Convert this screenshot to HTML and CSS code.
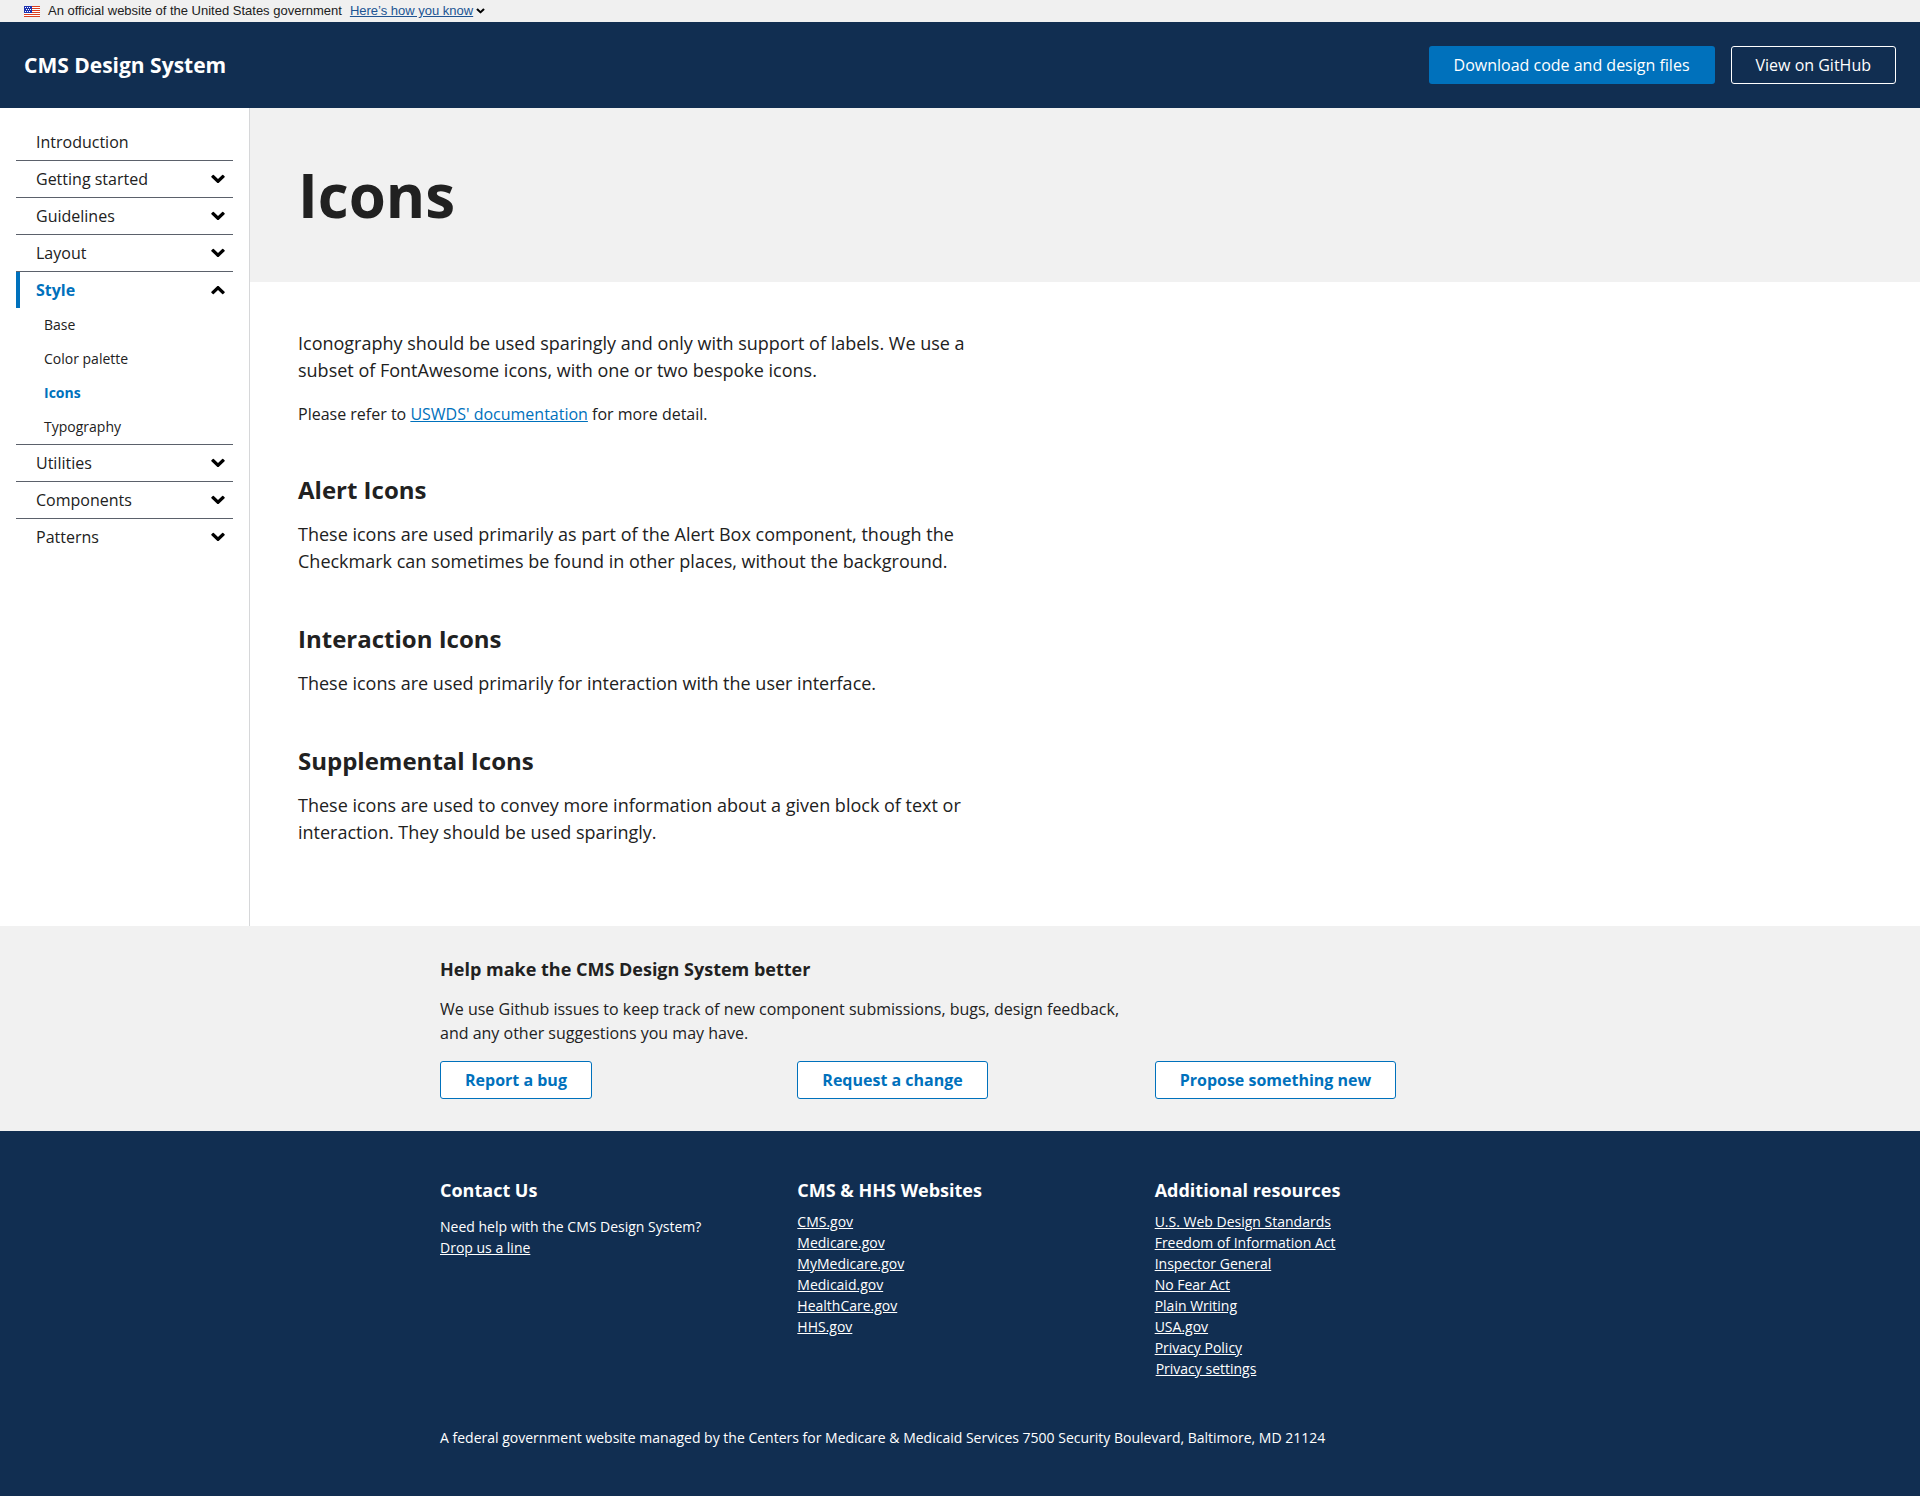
FILE: index.html
```html
<!DOCTYPE html>
<html lang="en">
<head>
<meta charset="utf-8">
<meta name="viewport" content="width=device-width, initial-scale=1">
<title>Icons - CMS Design System</title>
<link rel="stylesheet" href="styles.css">
</head>
<body>
<svg class="sprite" aria-hidden="true">
  <symbol id="chevron" viewBox="0 0 14 10"><path fill="currentColor" d="M.4 2.2L1.800.9Q2.300.5 2.800.9L7 4.900 11.200.9Q11.700.5 12.200.9L13.600 2.200Q14 2.700 13.600 3.200L7.600 8.900Q7 9.300 6.400 8.900L.4 3.200Q0 2.700.4 2.200Z"/></symbol>
</svg>
<section class="banner" aria-label="Official government website">
  <svg class="flag" viewBox="0 0 16 11" aria-hidden="true" shape-rendering="crispEdges">
    <path fill="#fff" d="M0 0h16v11H0z"/>
    <path fill="#db3e1f" d="M8 0h8v1H8zM8 2h8v1H8zM8 4h8v1H8zM8 6h8v1H8zM0 8h16v1H0zM0 10h16v1H0z"/>
    <path fill="#1e33b1" d="M0 0h8v7H0z"/>
    <path fill="#fff" d="M1 1h1v1H1zM3 1h1v1H3zM5 1h1v1H5zM2 3h1v1H2zM4 3h1v1H4zM6 3h1v1H6zM1 5h1v1H1zM3 5h1v1H3zM5 5h1v1H5z"/>
  </svg>
  <span class="banner-text">An official website of the United States government</span>
  <button class="banner-toggle" type="button"><span>Here’s how you know</span><svg class="banner-chevron" aria-hidden="true"><use href="#chevron"/></svg></button>
</section>
<header class="header">
  <a class="brand" href="#">CMS Design System</a>
  <div class="header-actions">
    <a class="button button-primary" href="#">Download code and design files</a>
    <a class="button button-inverse" href="#">View on GitHub</a>
  </div>
</header>
<div class="layout">
  <nav class="sidebar" aria-label="Main">
    <ul class="nav">
      <li class="nav-item"><a class="nav-label" href="#">Introduction</a></li>
      <li class="nav-item"><button class="nav-label" type="button">Getting started<svg class="chevron" aria-hidden="true"><use href="#chevron"/></svg></button></li>
      <li class="nav-item"><button class="nav-label" type="button">Guidelines<svg class="chevron" aria-hidden="true"><use href="#chevron"/></svg></button></li>
      <li class="nav-item"><button class="nav-label" type="button">Layout<svg class="chevron" aria-hidden="true"><use href="#chevron"/></svg></button></li>
      <li class="nav-item">
        <button class="nav-label nav-label-current" type="button" aria-expanded="true">Style<svg class="chevron chevron-up" aria-hidden="true"><use href="#chevron"/></svg></button>
        <ul class="subnav">
          <li><a class="subnav-link" href="#">Base</a></li>
          <li><a class="subnav-link" href="#">Color palette</a></li>
          <li><a class="subnav-link subnav-link-current" href="#" aria-current="page">Icons</a></li>
          <li><a class="subnav-link" href="#">Typography</a></li>
        </ul>
      </li>
      <li class="nav-item"><button class="nav-label" type="button">Utilities<svg class="chevron" aria-hidden="true"><use href="#chevron"/></svg></button></li>
      <li class="nav-item"><button class="nav-label" type="button">Components<svg class="chevron" aria-hidden="true"><use href="#chevron"/></svg></button></li>
      <li class="nav-item"><button class="nav-label" type="button">Patterns<svg class="chevron" aria-hidden="true"><use href="#chevron"/></svg></button></li>
    </ul>
  </nav>
  <main class="main">
    <div class="page-header"><h1 class="page-title">Icons</h1></div>
    <div class="content">
      <p class="lead">Iconography should be used sparingly and only with support of labels. We use a subset of FontAwesome icons, with one or two bespoke icons.</p>
      <p class="note">Please refer to <a class="link" href="#">USWDS' documentation</a> for more detail.</p>
      <h2 class="section-title">Alert Icons</h2>
      <p class="lead">These icons are used primarily as part of the Alert Box component, though the Checkmark can sometimes be found in other places, without the background.</p>
      <h2 class="section-title">Interaction Icons</h2>
      <p class="lead">These icons are used primarily for interaction with the user interface.</p>
      <h2 class="section-title">Supplemental Icons</h2>
      <p class="lead">These icons are used to convey more information about a given block of text or interaction. They should be used sparingly.</p>
    </div>
  </main>
</div>
<section class="feedback">
  <div class="container">
    <h3 class="small-title">Help make the CMS Design System better</h3>
    <p class="feedback-text">We use Github issues to keep track of new component submissions, bugs, design feedback, and any other suggestions you may have.</p>
    <div class="columns">
      <div><a class="button button-outline" href="#">Report a bug</a></div>
      <div><a class="button button-outline" href="#">Request a change</a></div>
      <div><a class="button button-outline" href="#">Propose something new</a></div>
    </div>
  </div>
</section>
<footer class="footer">
  <div class="container">
    <div class="columns">
      <div>
        <h3 class="small-title">Contact Us</h3>
        <p class="contact">Need help with the CMS Design System?<br><a class="footer-link" href="#">Drop us a line</a></p>
      </div>
      <div>
        <h3 class="small-title">CMS &amp; HHS Websites</h3>
        <ul class="footer-list">
          <li><a class="footer-link" href="#">CMS.gov</a></li>
          <li><a class="footer-link" href="#">Medicare.gov</a></li>
          <li><a class="footer-link" href="#">MyMedicare.gov</a></li>
          <li><a class="footer-link" href="#">Medicaid.gov</a></li>
          <li><a class="footer-link" href="#">HealthCare.gov</a></li>
          <li><a class="footer-link" href="#">HHS.gov</a></li>
        </ul>
      </div>
      <div>
        <h3 class="small-title">Additional resources</h3>
        <ul class="footer-list">
          <li><a class="footer-link" href="#">U.S. Web Design Standards</a></li>
          <li><a class="footer-link" href="#">Freedom of Information Act</a></li>
          <li><a class="footer-link" href="#">Inspector General</a></li>
          <li><a class="footer-link" href="#">No Fear Act</a></li>
          <li><a class="footer-link" href="#">Plain Writing</a></li>
          <li><a class="footer-link" href="#">USA.gov</a></li>
          <li><a class="footer-link" href="#">Privacy Policy</a></li>
          <li><button class="footer-link footer-button" type="button">Privacy settings</button></li>
        </ul>
      </div>
    </div>
    <p class="address">A federal government website managed by the Centers for Medicare &amp; Medicaid Services 7500 Security Boulevard, Baltimore, MD 21124</p>
  </div>
</footer>
</body>
</html>
```
FILE: styles.css
```css
* { box-sizing: border-box; }

body {
  margin: 0;
  background: #fff;
  color: #212121;
  font-family: "Open Sans", "Noto Sans", sans-serif;
  font-size: 16px;
  line-height: 24px;
}

h1, h2, h3, p, ul { margin: 0; padding: 0; }
ul { list-style: none; }
button { border: 0; padding: 0; background: none; color: inherit; font: inherit; cursor: pointer; }
.sprite { display: none; }

/* Government banner */
.banner {
  display: flex;
  align-items: center;
  gap: 8px;
  height: 22px;
  padding: 0 24px;
  background: #f0f0f0;
  font-family: "Liberation Sans", Arial, sans-serif;
  font-size: 13px;
  line-height: 16px;
}
.flag { width: 16px; height: 11px; }
.banner-toggle { display: flex; align-items: center; gap: 3px; color: #205493; text-decoration: underline; }
.banner-chevron { width: 9px; height: 6px; color: #000; }

/* Site header */
.header {
  display: flex;
  align-items: center;
  justify-content: space-between;
  padding: 24px;
  background: #112e51;
}
.brand { color: #fff; font-size: 21px; font-weight: 700; line-height: 32px; text-decoration: none; }
.header-actions { display: flex; gap: 16px; }

.button {
  display: inline-block;
  border: 1px solid transparent;
  border-radius: 3px;
  padding: 8px 24px;
  line-height: 20px;
  text-align: center;
  text-decoration: none;
}
.button-primary { background: #0071bc; color: #fff; }
.button-inverse { border-color: #fff; color: #fff; }
.button-outline { border-color: #0071bc; background: #fff; color: #0071bc; font-weight: 700; }

/* Sidebar navigation */
.layout { display: flex; }
.sidebar { flex: none; width: 250px; border-right: 1px solid #d6d7d9; padding: 16px; }
.nav-item + .nav-item { border-top: 1px solid #5b616b; }
.nav-label {
  display: flex;
  align-items: center;
  justify-content: space-between;
  width: 100%;
  padding: 6px 8px 6px 20px;
  color: #212121;
  text-align: left;
  text-decoration: none;
}
.nav-label-current { border-left: 4px solid #0071bc; padding-left: 16px; color: #0071bc; font-weight: 700; }
.chevron { width: 14px; height: 10px; color: #000; }
.chevron-up { transform: rotate(180deg); }
.subnav-link { display: block; padding: 6px 28px; color: #212121; font-size: 14px; line-height: 22px; text-decoration: none; }
.subnav-link-current { color: #0071bc; font-weight: 700; }

/* Page content */
.main { flex: 1; min-width: 0; }
.page-header { padding: 48px; background: #f1f1f1; }
.page-title { font-size: 60px; font-weight: 700; line-height: 78px; }
.content { padding: 48px 48px 80px; }
.lead { max-width: 680px; font-size: 18px; line-height: 27px; }
.note { margin-top: 18px; }
.link { color: #0071bc; }
.section-title { margin: 48px 0 16px; font-size: 24px; line-height: 31px; }

/* Feedback and footer */
.container { max-width: 1088px; margin: 0 auto; padding: 0 24px; }
.columns { display: grid; grid-template-columns: repeat(3, 1fr); gap: 32px; }
.small-title { font-size: 18px; line-height: 23px; }
.feedback { padding: 32px 0; background: #f1f1f1; }
.feedback-text { max-width: 680px; margin: 16px 0; }
.footer { padding: 48px 0; background: #112e51; color: #fff; font-size: 14px; line-height: 21px; }
.footer-list { margin-top: 9px; }
.footer-link { display: inline-block; color: #fff; text-decoration: underline; }
.footer-button { padding: 0 1px; }
.contact { margin-top: 14px; }
.address { margin-top: 48px; }
```
